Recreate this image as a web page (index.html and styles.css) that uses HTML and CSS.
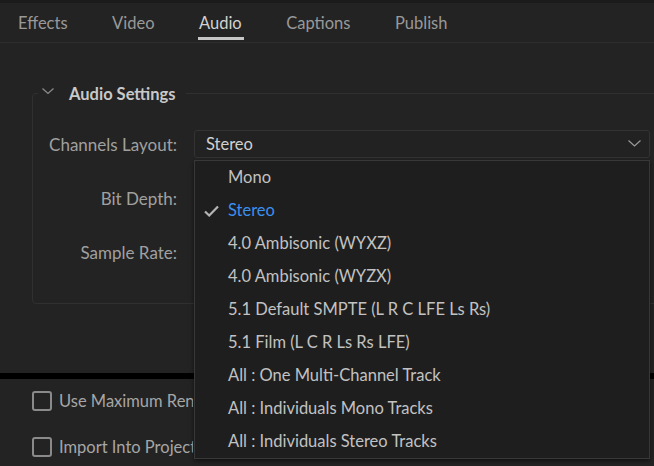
FILE: index.html
```html
<!DOCTYPE html>
<html>
<head>
<meta charset="utf-8">
<link rel="stylesheet" href="styles.css">
</head>
<body>
<div class="topline"></div>
<nav class="tabs">
  <span class="tab">Effects</span>
  <span class="tab">Video</span>
  <span class="tab active">Audio</span>
  <span class="tab">Captions</span>
  <span class="tab">Publish</span>
</nav>
<main class="panel">
  <section class="group">
    <div class="legend">
      <svg class="legend-chev" width="12" height="7" viewBox="0 0 12 7"><polyline points="0.5,0.5 6,5.5 11.5,0.5" fill="none" stroke="#8c8c8c" stroke-width="1.2"/></svg>
      <span class="legend-text">Audio Settings</span>
    </div>
    <div class="row">
      <label class="label">Channels Layout:</label>
      <div class="control">
        <div class="select">
          <span class="select-value">Stereo</span>
          <svg class="select-chev" width="13" height="7" viewBox="0 0 13 7"><polyline points="0.5,0.5 6.5,6 12.5,0.5" fill="none" stroke="#9a9a9a" stroke-width="1.2"/></svg>
        </div>
        <ul class="menu">
          <li class="item">Mono</li>
          <li class="item selected"><svg class="check" width="15" height="12" viewBox="0 0 15 12"><polyline points="1,6.5 5.2,10.5 14,1.5" fill="none" stroke="#b4b4b4" stroke-width="2.2"/></svg>Stereo</li>
          <li class="item">4.0 Ambisonic (WYXZ)</li>
          <li class="item">4.0 Ambisonic (WYZX)</li>
          <li class="item">5.1 Default SMPTE (L R C LFE Ls Rs)</li>
          <li class="item">5.1 Film (L C R Ls Rs LFE)</li>
          <li class="item">All : One Multi-Channel Track</li>
          <li class="item">All : Individuals Mono Tracks</li>
          <li class="item">All : Individuals Stereo Tracks</li>
        </ul>
      </div>
    </div>
    <div class="row">
      <label class="label">Bit Depth:</label>
      <div class="control"><div class="select"></div></div>
    </div>
    <div class="row">
      <label class="label">Sample Rate:</label>
      <div class="control"><div class="select"></div></div>
    </div>
  </section>
</main>
<div class="divider"></div>
<section class="lower">
  <div class="check-row"><span class="box"></span><span class="check-label">Use Maximum Render Quality</span></div>
  <div class="check-row"><span class="box"></span><span class="check-label">Import Into Project</span></div>
</section>
</body>
</html>
```
FILE: styles.css
```css
* { box-sizing: border-box; }
html, body {
  margin: 0;
  padding: 0;
}
body {
  width: 654px;
  height: 466px;
  overflow: hidden;
  background: #232323;
  font-family: Lato, "Liberation Sans", sans-serif;
  font-size: 16.5px;
  color: #a3a3a3;
  position: relative;
}
.topline {
  height: 3px;
  background: #1b1b1b;
}
.tabs {
  height: 40px;
  display: flex;
  gap: 44.5px;
  padding-left: 18px;
  border-bottom: 1px solid #2d2d2d;
}
.tab {
  position: relative;
  line-height: 40px;
  height: 40px;
  color: #999999;
}
.tab.active {
  color: #d2d2d2;
}
.tab.active::after {
  content: "";
  position: absolute;
  left: -1px;
  right: -2px;
  top: 34px;
  height: 3px;
  background: #c6c6c6;
}
.panel {
  height: 330px;
  padding-top: 50px;
}
.group {
  margin-left: 32px;
  margin-right: -20px;
  border: 1px solid #303030;
  border-radius: 4px;
  padding-bottom: 37px;
}
.legend {
  display: flex;
  align-items: center;
  width: max-content;
  height: 24px;
  margin-top: -12px;
  margin-left: 5px;
  padding: 0 10px 0 4px;
  background: #232323;
}
.legend-chev {
  margin-top: -6px;
}
.legend-text {
  margin-left: 15px;
  font-weight: bold;
  color: #c9c9c9;
}
.row {
  display: flex;
  align-items: center;
  height: 28px;
  margin-top: 26px;
}
.legend + .row { margin-top: 24px; }
.label {
  width: 144px;
  text-align: right;
  color: #a0a0a0;
  white-space: nowrap;
  font-size: 17px;
}
.control {
  position: relative;
  margin-left: 17px;
  width: 456px;
  height: 28px;
}
.select {
  height: 28px;
  border: 1px solid #333333;
  border-radius: 3px;
  background: #222222;
  display: flex;
  align-items: center;
  padding-left: 11px;
  padding-right: 8px;
}
.select-value {
  flex: 1;
  color: #d0d0d0;
}
.select-chev {
  margin-top: -2px;
}
.menu {
  position: absolute;
  left: 0;
  top: 30px;
  width: 456px;
  margin: 0;
  padding: 0;
  list-style: none;
  background: #1e1e1e;
  border: 1px solid #383838;
  box-shadow: 0 2px 4px rgba(0,0,0,0.5);
  z-index: 5;
}
.item {
  height: 33px;
  line-height: 33px;
  padding-left: 33px;
  color: #c2c2c2;
  position: relative;
}
.item.selected {
  color: #3a8ff0;
}
.check {
  position: absolute;
  left: 9px;
  top: 11px;
}
.divider {
  height: 6px;
  background: #000000;
}
.lower {
  padding-top: 12px;
  padding-left: 32px;
}
.check-row {
  display: flex;
  align-items: center;
  height: 20px;
  margin-bottom: 26px;
  white-space: nowrap;
}
.box {
  width: 20px;
  height: 20px;
  border: 2px solid #8a8a8a;
  border-radius: 3px;
  flex: none;
}
.check-label {
  margin-left: 7px;
  color: #a6a6a6;
  max-width: 134px;
  overflow: hidden;
}
```
